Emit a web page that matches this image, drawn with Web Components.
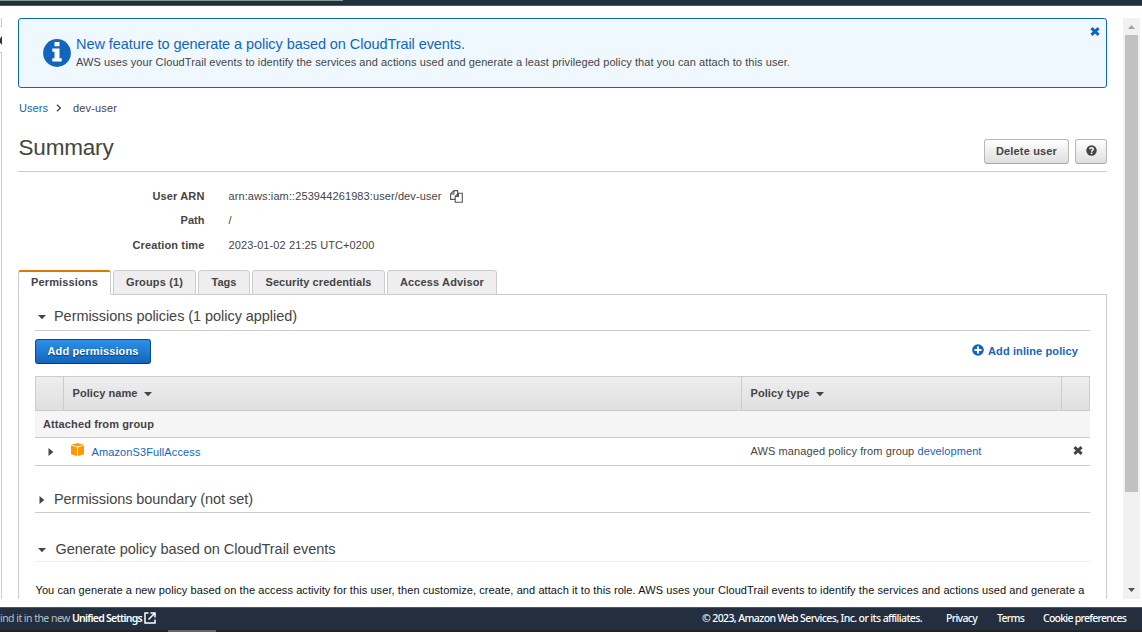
<!DOCTYPE html>
<html lang="en">
<head>
<meta charset="utf-8">
<title>IAM user summary</title>
<style>
html,body{margin:0;height:632px;overflow:hidden;background:#fff}
body{font:11px/14px "Liberation Sans",Arial,sans-serif;color:#444}
</style>
</head>
<body>
<iam-console></iam-console>
<script>
const define = (name, html, extra) => customElements.define(name, class extends HTMLElement {
  constructor() {
    super();
    this.attachShadow({mode: 'open'}).innerHTML = html;
  }
  connectedCallback() { if (extra) extra(this); }
});

/* Single-line text tracked out to a set width. */
define('fit-text', `<style>
:host{display:inline-block;white-space:nowrap;flex:none}
span{display:inline-block;white-space:pre}
</style><span><slot></slot></span>`, el => {
  const w = parseFloat(el.getAttribute('w'));
  const span = el.shadowRoot.querySelector('span');
  requestAnimationFrame(() => {
    const n = el.textContent.length;
    span.style.letterSpacing = ((w - span.getBoundingClientRect().width) / n) + 'px';
    el.style.width = w + 'px';
  });
});

define('caret-icon', `<style>
:host{display:block;width:8px;height:8px;flex:none}
svg{display:block}
:host([dir=right]) .d,:host(:not([dir=right])) .r{display:none}
</style><svg width="8" height="8" fill="currentColor"><path class="d" d="M0 2h8L4 6.2z"/><path class="r" d="M1.5 0v8L6.3 4z"/></svg>`);

define('close-icon', `<style>:host{display:block;width:10px;height:9px;flex:none}svg{display:block}</style>
<svg width="10" height="9" viewBox="0 0 10 9"><path d="M1.4 1.2 8.6 7.8M8.6 1.2 1.4 7.800" stroke="currentColor" stroke-width="3"/></svg>`);

define('aws-button', `<style>
:host{display:flex;box-sizing:border-box;height:25px;align-items:center;justify-content:center;padding-bottom:2px;border:1px solid #b8b8b8;border-bottom-color:#a9a9a9;border-radius:3px;background:linear-gradient(#fff,#dedede);font-weight:bold;color:#444;flex:none}
:host([primary]){color:#fff;background:linear-gradient(#2f8fe8,#1166bb);border-color:#0d4c8c;border-bottom-color:#0a3b6d;text-shadow:0 1px 1px #06386b}
</style><slot></slot>`);

define('info-banner', `<style>
:host{display:flex;box-sizing:border-box;height:70px;border:1px solid #1166bb;border-radius:3px;background:#f0f8ff;padding:0 6px 0 24px}
.i{display:block;margin-top:20px;flex:none}
.t{flex:1;padding:16px 0 0 5px}
.h{font-size:14.5px;line-height:18px;height:18px;color:#1166bb}
.p{height:16px;line-height:16px;margin-top:1px}
close-icon{color:#1166bb;margin:8px 0 0}
</style>
<svg class="i" width="28" height="28" viewBox="0 0 28 28"><circle cx="14" cy="14" r="13.9" fill="#1166bb"/><path fill="#fff" d="M11.500 3h5v4.200h-5zM9.300 9.400h7.200v9.800h2.200v3.400H9.300v-3.400h2.200v-6.400H9.300z"/></svg>
<div class="t"><div class="h"><fit-text w="389">New feature to generate a policy based on CloudTrail events.</fit-text></div>
<div class="p"><fit-text w="714">AWS uses your CloudTrail events to identify the services and actions used and generate a least privileged policy that you can attach to this user.</fit-text></div></div>
<close-icon></close-icon>`);

define('bread-crumb', `<style>
:host{display:flex;height:40px;align-items:center;padding-left:1px}
a{color:#1166bb}svg{margin:0 11px 0 8px}
</style><a><fit-text w="29">Users</fit-text></a><svg width="6" height="8" fill="none" stroke="#444" stroke-width="1.3"><path d="M1 .8 4.4 4 1 7.2"/></svg><fit-text w="44">dev-user</fit-text>`);

define('page-title', `<style>
:host{display:flex;box-sizing:border-box;height:44px;border-bottom:1px solid #ccc}
h1{flex:1;margin:0 0 0 .5px;font:22.5px/40px "Liberation Sans",Arial,sans-serif;color:#444}
aws-button{margin-top:11px}.d{width:85px;margin-right:6px}.q{width:32px}
</style><h1><fit-text w="95">Summary</fit-text></h1>
<aws-button class="d"><fit-text w="61">Delete user</fit-text></aws-button>
<aws-button class="q"><svg width="11" height="11" viewBox="0 0 11 11" style="margin-top:-1px"><circle cx="5.5" cy="5.5" r="5.2" fill="#444"/><path d="M3.7 4.2C3.8 2.3 7.3 2.3 7.3 4.2 7.3 5.3 5.6 5.3 5.6 6.7" fill="none" stroke="#fff" stroke-width="1.5"/><path d="M4.8 7.5h1.6v1.500H4.800z" fill="#fff"/></svg></aws-button>`);

define('detail-list', `<style>
:host{display:grid;box-sizing:border-box;height:98px;padding-top:12px;grid-template-columns:186.500px 1fr;grid-template-rows:24px 24px 26px;column-gap:24px;align-items:center;align-content:start}
b{text-align:right}.v{display:flex;align-items:center}svg{margin-left:8px}
</style>
<b><fit-text w="52">User ARN</fit-text></b><div class="v"><fit-text w="213">arn:aws:iam::253944261983:user/dev-user</fit-text>
<svg width="13" height="13" fill="#fff" stroke="#555" stroke-width="1.1"><path d="M.6 3.900 3.900.6h3.700v8.800h-7zM.6 4h3.300V.6"/><path d="M5.200 6.400 8.400 3.200h3.900v9H5.200zM5.200 6.500h3.300V3.200"/></svg></div>
<b><fit-text w="24">Path</fit-text></b><div class="v">/</div>
<b><fit-text w="72">Creation time</fit-text></b><div class="v"><fit-text w="146">2023-01-02 21:25 UTC+0200</fit-text></div>`);

define('aws-tab', `<style>
:host{display:flex;box-sizing:border-box;height:25px;align-items:center;justify-content:center;padding-bottom:2px;border:1px solid #ccc;border-radius:3px 3px 0 0;background:#eee;font-weight:bold;flex:none}
:host([active]){background:#fff;border-bottom-color:#fff;border-top:2px solid #e07700;padding-bottom:2px}
</style><slot></slot>`);

define('tab-bar', `<style>
:host{display:flex;gap:2px;height:25px;margin-bottom:-1px;position:relative}
</style>
<aws-tab active style="width:93px"><fit-text w="67">Permissions</fit-text></aws-tab>
<aws-tab style="width:83px"><fit-text w="57">Groups (1)</fit-text></aws-tab>
<aws-tab style="width:52px"><fit-text w="25">Tags</fit-text></aws-tab>
<aws-tab style="width:133px"><fit-text w="106">Security credentials</fit-text></aws-tab>
<aws-tab style="width:110px"><fit-text w="84">Access Advisor</fit-text></aws-tab>`);

define('section-head', `<style>
:host{display:flex;box-sizing:border-box;align-items:flex-end;border-bottom:1px solid #ccc;font-size:14.5px;line-height:18px;padding:0 0 4px 3px}
caret-icon{margin:0 8px 4px 0}
</style><caret-icon></caret-icon><slot></slot>`, el => {
  if (el.hasAttribute('closed')) el.shadowRoot.querySelector('caret-icon').setAttribute('dir', 'right');
});

define('policy-table', `<style>
:host{display:block}
.r{display:grid;grid-template-columns:28px 678px 320px 1fr;box-sizing:border-box;border-bottom:1px solid #ccc}
.h{height:35px;grid-template-columns:27px 678px 320px 1fr;border:1px solid #ccc;background:linear-gradient(#eee,#dfdfdf);font-weight:bold}
.h>div{display:flex;align-items:center;padding:0 0 2px 8.500px}
.h>div+div{border-left:1px solid #ccc}
.h caret-icon{margin:3px 0 0 6.500px}
.g{display:flex;height:27px;align-items:center;background:#f5f5f5;font-weight:bold;padding-left:8px}
.b{height:28px}
.b>div{display:flex;align-items:center}
a{color:#1166bb}
</style>
<div class="r h"><div></div><div><fit-text w="65">Policy name</fit-text><caret-icon></caret-icon></div><div><fit-text w="59">Policy type</fit-text><caret-icon></caret-icon></div><div></div></div>
<div class="r g"><fit-text w="111">Attached from group</fit-text></div>
<div class="r b"><div style="padding-left:12px"><caret-icon dir="right"></caret-icon></div>
<div style="padding-left:8px"><svg width="13" height="13" viewBox="0 0 13 13" style="margin:-4px 7.500px 0 0"><path fill="#f90" d="M6.500 0 12.700 1.800 6.500 3.500.3 1.800zM0 2.600l6 1.700V13L0 11.200zM13 2.600 7 4.300V13l6-1.800z"/></svg><a><fit-text w="109">AmazonS3FullAccess</fit-text></a></div>
<div style="padding-left:9.500px;margin-top:-1px"><fit-text w="167">AWS managed policy from group </fit-text><a><fit-text w="64">development</fit-text></a></div>
<div style="padding-left:12px;margin-top:-2px"><close-icon></close-icon></div></div>`);

define('permissions-panel', `<style>
:host{display:block;box-sizing:border-box;flex:1;min-height:0;border:1px solid #ccc;border-bottom:0;padding:0 16px;overflow:hidden}
.bar{display:flex;height:45px;justify-content:space-between;box-sizing:border-box;padding:8px 12px 0 0}
.a{display:flex;height:23px;align-items:center;color:#1166bb;font-weight:bold}
.a svg{margin:-1px 4.500px 0 0}
.p{color:#111;margin:21px 0 0 .5px}
</style>
<section-head style="height:36px;padding-bottom:5px"><fit-text w="243">Permissions policies (1 policy applied)</fit-text></section-head>
<div class="bar"><aws-button primary style="width:116px"><fit-text w="91">Add permissions</fit-text></aws-button>
<div class="a"><svg width="12" height="12"><circle cx="6" cy="6" r="5.800" fill="#1166bb"/><path d="M6 2.500v7M2.500 6h7" stroke="#fff" stroke-width="2"/></svg><fit-text w="90">Add inline policy</fit-text></div></div>
<policy-table></policy-table>
<section-head closed style="height:47px"><fit-text w="199">Permissions boundary (not set)</fit-text></section-head>
<section-head style="height:49px;border-color:#eaeded;padding-bottom:3px"><fit-text w="280" style="margin-left:1.500px">Generate policy based on CloudTrail events</fit-text></section-head>
<div class="p"><fit-text w="1049">You can generate a new policy based on the access activity for this user, then customize, create, and attach it to this role. AWS uses your CloudTrail events to identify the services and actions used and generate a</fit-text></div>`);

define('scroll-bar', `<style>
:host{display:flex;flex-direction:column;width:17px;background:#f1f1f1;align-items:center}
.s{height:17px;width:17px;display:block}
.t{width:13px;height:457px;background:#c1c1c1}
</style><svg class="s"><path fill="#a3a3a3" d="M5 11h7L8.500 7z"/></svg><div class="t"></div><div style="flex:1"></div><svg class="s"><path fill="#505050" d="M5 6h7l-3.500 4z"/></svg>`);

define('side-rail', `<style>
:host{display:flex;flex-direction:column;width:2px;box-sizing:border-box}
.a{height:9px;box-sizing:border-box;border-right:1px solid #ccc;border-bottom:1px solid #ccc}
.b{flex:1;border-right:1px solid #ccc;border-top:1px solid #ccc}
svg{display:block;margin:9px 0 7px}
</style><div class="a"></div><svg width="2" height="9"><path d="M2 0v9L0 6.500v-4z" fill="#333"/></svg><div class="b"></div>`);

define('console-footer', `<style>
:host{display:flex;flex-direction:column;height:25px;background:#232f3e;font:10.5px/20px "Noto Sans","Open Sans",sans-serif;color:#fff;font-weight:500}
.l{display:flex;height:20px;align-items:center;border-top:1px solid #4b5563;padding-right:16px}
.m{color:#b7bfc7;font-weight:400}
.u{font-weight:600;margin-right:2px}
.s{flex:1}
.k{height:2px;background:#222;margin-top:2px}
.k i{display:block;width:48px;height:2px;margin-left:168px;background:#666}
</style><div class="l"><span class="m"><fit-text w="72">ind it in the new </fit-text></span><span class="u"><fit-text w="70">Unified Settings</fit-text></span>
<svg width="12" height="12" fill="none" stroke="#fff" stroke-width="1.5"><path d="M4.500 1H1v10h10V7.500M6.500 1H11v4.500M11 1 4.500 7.500"/></svg><span class="s"></span>
<fit-text w="220" style="margin-right:24px">© 2023, Amazon Web Services, Inc. or its affiliates.</fit-text><fit-text w="31" style="margin-right:20px">Privacy</fit-text><fit-text w="27" style="margin-right:19px">Terms</fit-text><fit-text w="83">Cookie preferences</fit-text></div><div class="k"><i></i></div>`);

define('iam-console', `<style>
:host{display:flex;flex-direction:column;width:1142px;height:632px}
header{height:6px;box-sizing:border-box;background:#232f3e;border-bottom:1px solid #555564;flex:none}
header i{display:block;width:343px;height:1px;background:#829c93}
main{display:flex;height:581px;margin:12px 0 8px;flex:none}
.c{display:flex;flex-direction:column;width:1089px;margin:0 16px}
</style><header><i></i></header>
<main><side-rail></side-rail><div class="c"><info-banner></info-banner><bread-crumb></bread-crumb><page-title></page-title><detail-list></detail-list><tab-bar></tab-bar><permissions-panel></permissions-panel></div><scroll-bar></scroll-bar></main>
<console-footer></console-footer>`);
</script>
</body>
</html>
